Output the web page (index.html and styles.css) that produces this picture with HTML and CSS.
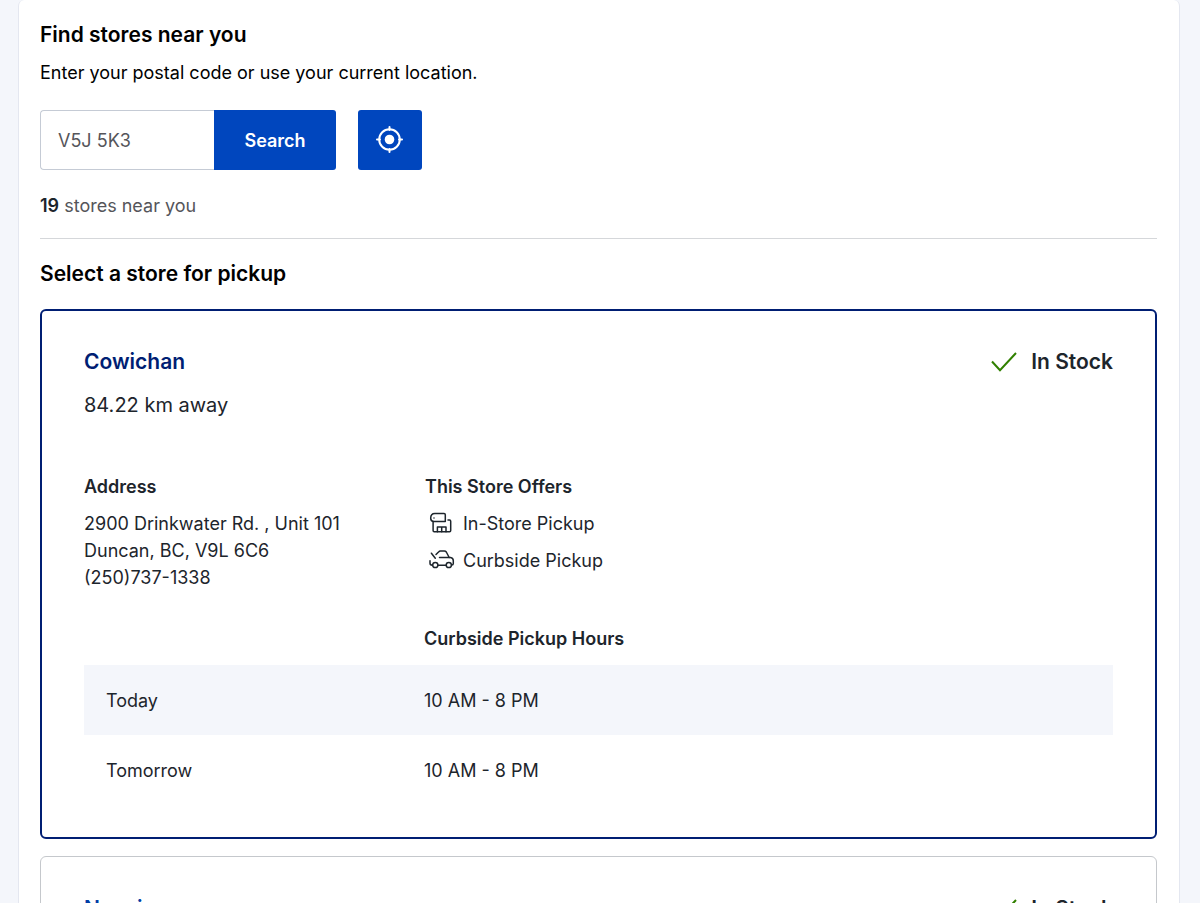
FILE: index.html
```html
<!DOCTYPE html>
<html lang="en">
<head>
    <meta charset="UTF-8">
    <meta name="viewport" content="width=device-width, initial-scale=1.0">
    <title>Find stores near you</title>
    <link rel="stylesheet" href="styles.css">
</head>
<body>
    <main class="panel">
        <section class="finder">
            <h2 class="heading">Find stores near you</h2>
            <label class="hint" for="postal-code">Enter your postal code or use your current location.</label>

            <form class="search-form">
                <input class="postal-input" id="postal-code" type="text" placeholder="V5J 5K3">
                <button class="search-button" type="submit">Search</button>
                <button class="locate-button" type="button" aria-label="Use current location">
                    <svg width="28" height="28" viewBox="0 0 28 28" fill="none" stroke="#fff" stroke-width="2" stroke-linecap="round">
                        <circle cx="13.5" cy="13.5" r="10.3"/>
                        <circle cx="13.5" cy="13.5" r="4.8" fill="#fff" stroke="none"/>
                        <path d="M13.5 1v3M13.5 23v3M1 13.5h3M23 13.5h3"/>
                    </svg>
                </button>
            </form>

            <p class="count"><strong>19</strong> stores near you</p>
        </section>

        <h2 class="heading">Select a store for pickup</h2>

        <article class="store selected">
            <header class="store-header">
                <h3 class="store-name">Cowichan</h3>
                <span class="stock">
                    <svg width="26" height="20" viewBox="0 0 26 20" fill="none" stroke="#318000" stroke-width="2">
                        <path d="M1 9.5L9 18.2L25 1"/>
                    </svg>
                    In Stock
                </span>
            </header>
            <p class="distance">84.22 km away</p>

            <div class="details">
                <div>
                    <h4 class="subheading">Address</h4>
                    <address class="address">
                        2900 Drinkwater Rd. , Unit 101<br>
                        Duncan, BC, V9L 6C6<br>
                        (250)737-1338
                    </address>
                </div>
                <div>
                    <h4 class="subheading">This Store Offers</h4>
                    <ul class="offers">
                        <li>
                            <svg width="28" height="24" viewBox="0 0 28 24" fill="none" stroke="#1d252c" stroke-width="1.5" stroke-linecap="round" stroke-linejoin="round">
                                <path d="M17.3 9.4H5.8C3.9 9.4 2.7 7.9 2.7 6.2C2.7 3.4 4.3 1.4 6.8 1.4H16C16.8 1.4 17.3 1.9 17.3 2.7V9.4"/>
                                <path d="M5.1 9.4V18.6C5.1 19.3 5.5 19.7 6.2 19.7H21.6C22.3 19.7 22.7 19.3 22.7 18.6V9.2C22.7 8.4 22.3 8 21.6 8H20"/>
                                <path d="M9.4 19.7V14.9H18V19.7M13.7 14.9V19.7M6 6v.1"/>
                            </svg>
                            In-Store Pickup
                        </li>
                        <li>
                            <svg width="28" height="24" viewBox="-1 1 28 24" fill="none" stroke="#1d252c" stroke-width="1.5" stroke-linecap="round" stroke-linejoin="round">
                                <path d="M2.4 5.2L6.3 10.2"/>
                                <path d="M7 6.5L9.8 3.7C10.2 3.2 10.7 3 11.4 3H15.3C16.2 3 16.8 3.3 17.3 4L20.2 9.5H10.5"/>
                                <path d="M20.2 9.5H21.5C23.4 9.8 24.3 11 24.3 12.7V15.5C24.3 16.4 23.6 17 22.8 17"/>
                                <path d="M1 12.7V15.3C1 16.5 1.6 17.2 3.3 17.2M9.3 17.2H17"/>
                                <circle cx="6.3" cy="17" r="2.6"/>
                                <circle cx="19.8" cy="17" r="2.6"/>
                            </svg>
                            Curbside Pickup
                        </li>
                    </ul>
                </div>
            </div>

            <table class="hours">
                <thead>
                    <tr>
                        <td></td>
                        <th scope="col">Curbside Pickup Hours</th>
                    </tr>
                </thead>
                <tbody>
                    <tr>
                        <th scope="row">Today</th>
                        <td>10 AM - 8 PM</td>
                    </tr>
                    <tr>
                        <th scope="row">Tomorrow</th>
                        <td>10 AM - 8 PM</td>
                    </tr>
                </tbody>
            </table>
        </article>

        <article class="store">
            <header class="store-header">
                <h3 class="store-name">Nanaimo</h3>
                <span class="stock">
                    <svg width="26" height="20" viewBox="0 0 26 20" fill="none" stroke="#318000" stroke-width="2">
                        <path d="M1 9.5L9 18.2L25 1"/>
                    </svg>
                    In Stock
                </span>
            </header>
        </article>
    </main>
</body>
</html>
```

FILE: styles.css
```css
* {
    box-sizing: border-box;
}
body {
    margin: 0;
    padding: 0 20px 0 18px;
    background: #f4f6fb;
    color: #1d252c;
    font-family: Inter, "Liberation Sans", sans-serif;
    font-size: 18px;
    line-height: 27px;
}
h2, h3, h4, p, ul {
    margin: 0;
    padding: 0;
}
.panel {
    min-height: 100vh;
    padding: 20px 22px 20px 21px;
    background: #fff;
    border: 1px solid #e4e7f0;
    border-top: none;
    border-radius: 6px 6px 0 0;
}
.heading {
    color: #000;
    font-size: 21px;
    font-weight: 600;
    line-height: 30px;
}
.finder {
    margin-bottom: 20px;
    padding-bottom: 19px;
    border-bottom: 1px solid #d5d7da;
}
.hint {
    display: block;
    margin-top: 9px;
    color: #000;
}
.search-form {
    display: flex;
    height: 60px;
    margin: 24px 0 22px;
}
.postal-input {
    width: 174px;
    padding: 0 17px;
    border: 1px solid #c5cbd5;
    border-right: none;
    border-radius: 4px 0 0 4px;
    background: #fff;
    color: #1d252c;
    font: inherit;
}
.postal-input::placeholder {
    color: #55555a;
    opacity: 1;
}
.search-button,
.locate-button {
    border: none;
    background: #0046be;
    color: #fff;
    font: inherit;
    font-weight: 600;
    cursor: pointer;
}
.search-button {
    width: 122px;
    border-radius: 0 3px 3px 0;
}
.locate-button {
    display: flex;
    align-items: center;
    justify-content: center;
    width: 64px;
    margin-left: 22px;
    padding: 0;
    border-radius: 3px;
}
.count {
    color: #55555a;
}
.count strong {
    color: #1d252c;
    font-weight: 600;
}
.store {
    margin-top: 17px;
    padding: 37px 43px;
    border: 1px solid #c5c8cc;
    border-radius: 6px;
}
.store.selected {
    margin-top: 20px;
    padding: 36px 42px 32px;
    border: 2px solid #001e73;
}
.store-header {
    display: flex;
    align-items: center;
    justify-content: space-between;
    font-size: 21px;
    font-weight: 600;
    line-height: 30px;
}
.store-name {
    color: #003da6;
    font-size: 21px;
    font-weight: 600;
}
.selected .store-name {
    color: #001e73;
}
.stock {
    display: flex;
    align-items: center;
    gap: 14px;
}
.distance {
    margin-top: 13px;
    font-size: 20px;
    line-height: 30px;
}
.details {
    display: grid;
    grid-template-columns: 341px 1fr;
    margin-top: 53px;
}
.subheading {
    font-size: 18px;
    font-weight: 600;
}
.address {
    margin-top: 10px;
    font-style: normal;
}
.offers {
    display: flex;
    flex-direction: column;
    gap: 10px;
    margin-top: 10px;
    list-style: none;
}
.offers li {
    display: flex;
    align-items: center;
    gap: 7px;
    padding-left: 3px;
}
.hours {
    width: 100%;
    margin-top: 34px;
    border-collapse: collapse;
    table-layout: fixed;
    text-align: left;
}
.hours tr > :first-child {
    width: 340px;
    padding-left: 22px;
}
.hours th,
.hours td {
    padding: 0;
}
.hours thead th {
    padding-bottom: 13px;
    font-weight: 600;
}
.hours tbody th {
    font-weight: 400;
}
.hours tbody tr {
    height: 70px;
}
.hours tbody tr:first-child {
    background: #f4f6fb;
}
```
